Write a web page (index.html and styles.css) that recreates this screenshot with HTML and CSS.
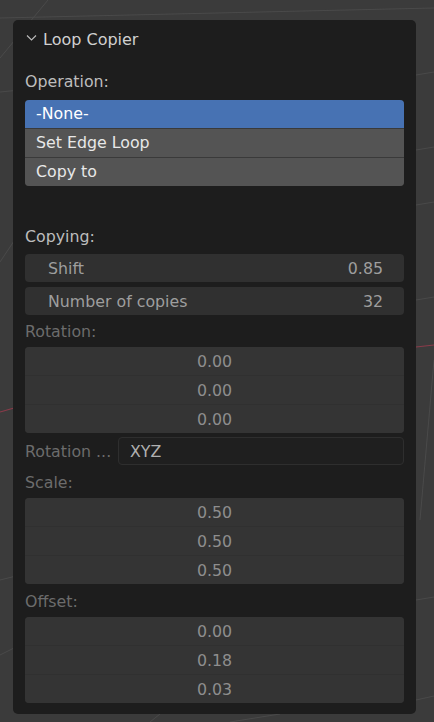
FILE: index.html
```html
<!DOCTYPE html>
<html>
<head>
<meta charset="utf-8">
<link rel="stylesheet" href="styles.css">
</head>
<body>
<svg class="viewport" width="434" height="722" viewBox="0 0 434 722">
  <g stroke="#4a4a4a" stroke-width="1" fill="none">
    <line x1="0" y1="18" x2="434" y2="8"/>
    <line x1="0" y1="58" x2="48" y2="0"/>
    <line x1="0" y1="92" x2="20" y2="90"/>
    <line x1="0" y1="262" x2="20" y2="232"/>
    <line x1="0" y1="580" x2="20" y2="575"/>
    <line x1="0" y1="655" x2="20" y2="645"/>
    <line x1="416" y1="75" x2="434" y2="72"/>
    <line x1="416" y1="150" x2="434" y2="147"/>
    <line x1="416" y1="205" x2="434" y2="202"/>
    <line x1="416" y1="300" x2="434" y2="297"/>
    <line x1="434" y1="360" x2="420" y2="520"/>
    <line x1="416" y1="600" x2="434" y2="597"/>
    <line x1="416" y1="700" x2="434" y2="696"/>
    <line x1="150" y1="722" x2="160" y2="714"/>
    <line x1="230" y1="722" x2="280" y2="714"/>
  </g>
  <line x1="0" y1="412" x2="14" y2="408" stroke="#8a3b4a" stroke-width="1.2"/>
  <line x1="416" y1="347" x2="434" y2="345" stroke="#8a3b4a" stroke-width="1.2"/>
</svg>

<div class="panel">
  <div class="header">
    <svg class="chevron" width="11" height="8" viewBox="0 0 11 8">
      <polyline points="1,1.5 5.5,6 10,1.5" fill="none" stroke="#bdbdbd" stroke-width="1.1"/>
    </svg>
    <span class="title">Loop Copier</span>
  </div>

  <div class="label first">Operation:</div>
  <div class="list">
    <div class="item selected">-None-</div>
    <div class="item">Set Edge Loop</div>
    <div class="item">Copy to</div>
  </div>

  <div class="label copying">Copying:</div>
  <div class="numfield"><span>Shift</span><span>0.85</span></div>
  <div class="numfield gap"><span>Number of copies</span><span>32</span></div>

  <div class="label dim">Rotation:</div>
  <div class="vector">
    <div class="cell">0.00</div>
    <div class="cell">0.00</div>
    <div class="cell">0.00</div>
  </div>
  <div class="enumrow">
    <span class="enumlabel">Rotation ...</span>
    <div class="enum">XYZ</div>
  </div>

  <div class="label dim after">Scale:</div>
  <div class="vector">
    <div class="cell">0.50</div>
    <div class="cell">0.50</div>
    <div class="cell">0.50</div>
  </div>

  <div class="label dim after">Offset:</div>
  <div class="vector">
    <div class="cell">0.00</div>
    <div class="cell">0.18</div>
    <div class="cell">0.03</div>
  </div>
</div>
</body>
</html>
```
FILE: styles.css
```css
html, body {
  margin: 0;
  padding: 0;
}
body {
  width: 434px;
  height: 722px;
  overflow: hidden;
  background: #3b3b3b;
  font-family: "DejaVu Sans", "Liberation Sans", sans-serif;
  font-size: 15.8px;
  position: relative;
}
.viewport {
  position: absolute;
  left: 0;
  top: 0;
}
.panel {
  position: relative;
  margin: 20px 0 0 13px;
  width: 403px;
  box-sizing: border-box;
  background: #1d1d1d;
  border-radius: 5px;
  padding: 0 12px 11px 12px;
  display: flex;
  flex-direction: column;
}
.header {
  height: 38px;
  display: flex;
  align-items: center;
  padding-left: 1px;
}
.chevron {
  margin-right: 6px;
  margin-top: -3px;
}
.title {
  color: #d0d0d0;
  font-size: 16px;
}
.label {
  height: 24px;
  line-height: 24px;
  color: #bdbdbd;
}
.label.first {
  margin-top: 12px;
}
.label.copying {
  margin-top: 39px;
}
.label.dim {
  color: #6c6c6c;
  margin-top: 5px;
}
.label.after {
  margin-top: 6px;
}
.list {
  margin-top: 6px;
  border-radius: 4px;
  overflow: hidden;
  background: #3a3a3a;
  display: flex;
  flex-direction: column;
  gap: 1px;
}
.item {
  height: 28px;
  line-height: 28px;
  padding-left: 11px;
  background: #545454;
  color: #e8e8e8;
}
.item.selected {
  background: #4772b3;
  color: #ffffff;
}
.numfield {
  margin-top: 5px;
  height: 28px;
  background: #303030;
  border-radius: 4px;
  display: flex;
  align-items: center;
  justify-content: space-between;
  padding: 0 21px 0 23px;
  color: #9e9e9e;
}
.vector {
  margin-top: 3px;
  height: 86px;
  border-radius: 4px;
  overflow: hidden;
  background: #303030;
  display: flex;
  flex-direction: column;
  gap: 1px;
}
.cell {
  flex: 1;
  background: #343434;
  color: #8e8e8e;
  display: flex;
  align-items: center;
  justify-content: center;
}
.enumrow {
  margin-top: 4px;
  height: 28px;
  display: flex;
  align-items: center;
}
.enumlabel {
  width: 93px;
  color: #6c6c6c;
  white-space: nowrap;
}
.enum {
  flex: 1;
  height: 28px;
  box-sizing: border-box;
  border: 1px solid #2e2e2e;
  border-radius: 4px;
  background: #1f1f1f;
  color: #b0b0b0;
  display: flex;
  align-items: center;
  padding-left: 11px;
}
```
